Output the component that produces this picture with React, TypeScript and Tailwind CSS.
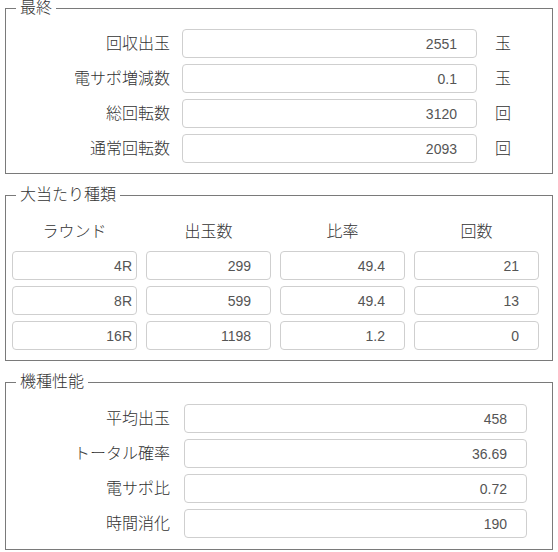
import React from "react";

const jp = "font-['Liberation_Sans','Noto_Sans_CJK_JP',sans-serif]";

function Box({ value, pr = "pr-[19px]" }: { value: string; pr?: string }) {
  return (
    <input
      readOnly
      value={value}
      className={`h-[29px] w-full rounded-[4px] border border-[#cfcfcf] bg-white ${pr} text-right text-[14px] text-[#555] outline-none font-['Liberation_Sans',sans-serif]`}
    />
  );
}

function Legend({ children }: { children: React.ReactNode }) {
  return (
    <legend className="ml-[10px] px-[4px] text-[16px] leading-[16px] font-light text-[#333]">
      {children}
    </legend>
  );
}

const totals = [
  { label: "回収出玉", value: "2551", unit: "玉" },
  { label: "電サポ増減数", value: "0.1", unit: "玉" },
  { label: "総回転数", value: "3120", unit: "回" },
  { label: "通常回転数", value: "2093", unit: "回" },
];

const hits = [
  ["4R", "299", "49.4", "21"],
  ["8R", "599", "49.4", "13"],
  ["16R", "1198", "1.2", "0"],
];

const spec = [
  { label: "平均出玉", value: "458" },
  { label: "トータル確率", value: "36.69" },
  { label: "電サポ比", value: "0.72" },
  { label: "時間消化", value: "190" },
];

const label = "text-right text-[16px] leading-[20px] font-light text-[#333]";

export default function App() {
  return (
    <div className={`w-[558px] h-[552px] bg-white pl-[5px] ${jp}`}>
      {/* 最終 */}
      <fieldset className="w-[548px] border border-[#7a7a7a] pt-[13px] pb-[10px]">
        <Legend>最終</Legend>
        <div className="grid grid-cols-[164px_295px_auto] gap-x-[12px] gap-y-[6px] items-center">
          {totals.map((r) => (
            <React.Fragment key={r.label}>
              <div className={label}>{r.label}</div>
              <Box value={r.value} />
              <div className="pl-[6px] text-[16px] leading-[20px] font-light text-[#333]">{r.unit}</div>
            </React.Fragment>
          ))}
        </div>
      </fieldset>

      {/* 大当たり種類 */}
      <fieldset className="mt-[13px] w-[548px] border border-[#7a7a7a] pt-[19px] pb-[10px]">
        <Legend>大当たり種類</Legend>
        <div className="grid grid-cols-[125px_125px_125px_125px] gap-x-[9px] gap-y-[6px] pl-[6px]">
          {["ラウンド", "出玉数", "比率", "回数"].map((h) => (
            <div key={h} className="mb-[3px] h-[20px] text-center text-[16px] leading-[20px] font-light text-[#333]">
              {h}
            </div>
          ))}
          {hits.map((row) =>
            row.map((v, i) => (
              <Box key={row[0] + i} value={v} pr={i === 0 ? "pr-[4px]" : "pr-[19px]"} />
            ))
          )}
        </div>
      </fieldset>

      {/* 機種性能 */}
      <fieldset className="mt-[13px] w-[548px] border border-[#7a7a7a] pt-[14px] pb-[11px]">
        <Legend>機種性能</Legend>
        <div className="grid grid-cols-[164px_343px] gap-x-[14px] gap-y-[6px] items-center">
          {spec.map((r) => (
            <React.Fragment key={r.label}>
              <div className={label}>{r.label}</div>
              <Box value={r.value} />
            </React.Fragment>
          ))}
        </div>
      </fieldset>
    </div>
  );
}
